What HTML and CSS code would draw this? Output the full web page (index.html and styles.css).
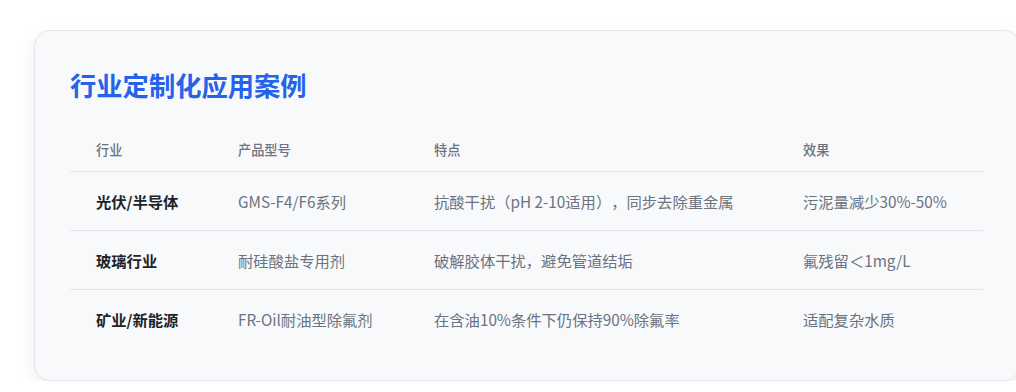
FILE: index.html
```html
<!DOCTYPE html>
<html lang="zh-CN">
<head>
<meta charset="utf-8">
<title>行业定制化应用案例</title>
<link rel="stylesheet" href="styles.css">
</head>
<body>
<section class="card">
  <h2 class="title">行业定制化应用案例</h2>
  <table class="cases">
    <thead>
      <tr>
        <th class="c1">行业</th>
        <th class="c2">产品型号</th>
        <th class="c3">特点</th>
        <th class="c4">效果</th>
      </tr>
    </thead>
    <tbody>
      <tr>
        <td class="ind">光伏/半导体</td>
        <td>GMS-F4/F6系列</td>
        <td>抗酸干扰（pH 2-10适用），同步去除重金属</td>
        <td>污泥量减少30%-50%</td>
      </tr>
      <tr>
        <td class="ind">玻璃行业</td>
        <td>耐硅酸盐专用剂</td>
        <td>破解胶体干扰，避免管道结垢</td>
        <td>氟残留＜1mg/L</td>
      </tr>
      <tr>
        <td class="ind">矿业/新能源</td>
        <td>FR-Oil耐油型除氟剂</td>
        <td>在含油10%条件下仍保持90%除氟率</td>
        <td>适配复杂水质</td>
      </tr>
    </tbody>
  </table>
</section>
</body>
</html>
```

FILE: styles.css
```css
html, body {
  margin: 0;
  padding: 0;
  background: #ffffff;
  overflow: hidden;
}
body {
  padding: 30px 0 0 34px;
  font-family: "Noto Sans CJK SC", "Noto Sans", sans-serif;
  text-spacing-trim: space-all;
}
.card {
  box-sizing: border-box;
  width: 986px;
  background: #f8f9fb;
  border: 1px solid #e4e6eb;
  border-radius: 16px;
  box-shadow: 0 6px 18px rgba(0, 0, 0, 0.08);
  padding: 37px 36px 32px 35px;
}
.title {
  margin: 0 0 27px 0;
  font-size: 26.3px;
  line-height: 34px;
  font-weight: 700;
  color: #2563eb;
}
.cases {
  width: 913px;
  border-collapse: collapse;
  table-layout: fixed;
}
.cases th,
.cases td {
  text-align: left;
  padding: 17px 0 17px 26px;
  font-size: 15.3px;
  line-height: 24px;
  color: #6b7280;
  font-weight: 400;
  border-bottom: 1px solid #e3e5ea;
  white-space: nowrap;
}
.cases th {
  padding-top: 11px;
  padding-bottom: 11px;
  font-size: 13.2px;
  line-height: 20px;
  font-weight: 500;
  color: #6b7280;
}
.cases tbody tr:last-child td {
  border-bottom: none;
}
.cases td.ind {
  color: #1f2328;
  font-weight: 700;
}
.c1 { width: 116px; }
.c2 { width: 170px; }
.c3 { width: 343px; }
.c4 { width: 180px; }
```
